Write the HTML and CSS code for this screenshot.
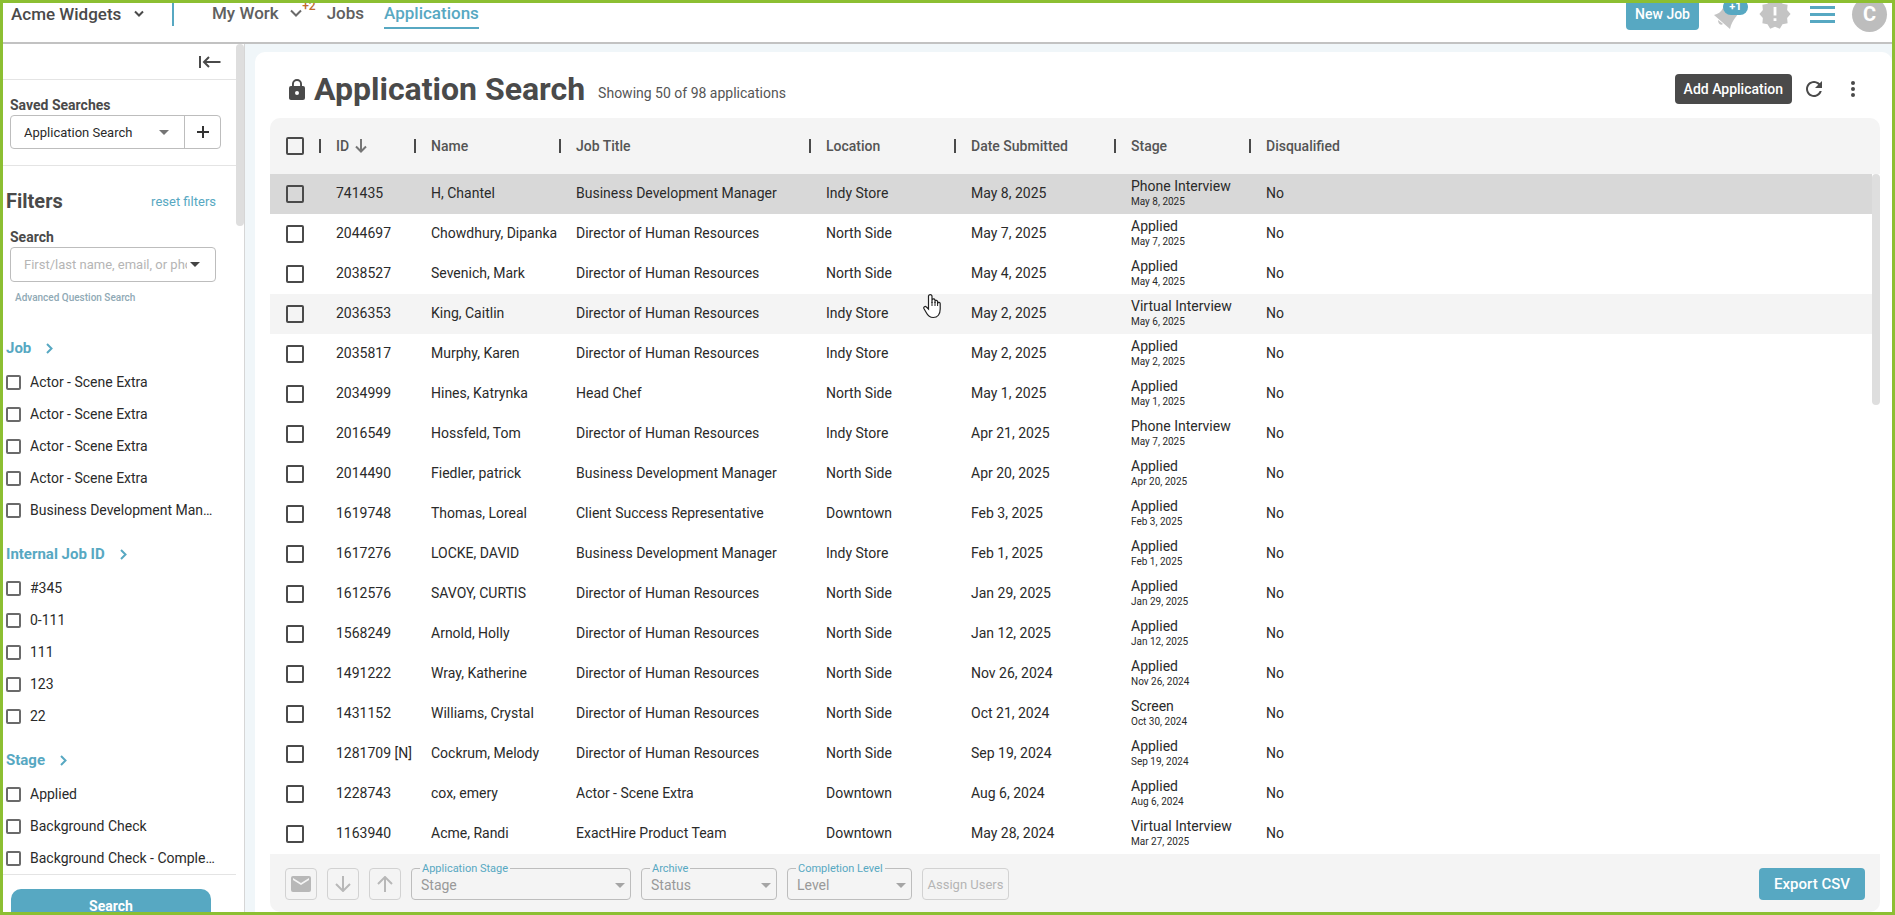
FILE: index.html
```html
<!DOCTYPE html>
<html lang="en">
<head>
    <meta charset="UTF-8">
    <meta name="viewport" content="width=device-width, initial-scale=1.0">
    <title>Application Search</title>
    <link rel="stylesheet" href="styles.css">
</head>
<body>
<div class="app">
    <header class="topbar">
        <button type="button" class="company">Acme Widgets
            <svg width="12" height="8" viewBox="0 0 12 8"><path d="M2 1.5l4 4 4-4" fill="none" stroke="#4a4a4a" stroke-width="2"/></svg>
        </button>
        <nav class="nav">
            <a href="#" class="with-badge">My Work
                <svg width="12" height="8" viewBox="0 0 12 8"><path d="M1 1.5l5 5 5-5" fill="none" stroke="#6a6a6a" stroke-width="2"/></svg>
                <span class="count">+2</span>
            </a>
            <a href="#">Jobs</a>
            <a href="#" class="active">Applications</a>
        </nav>
        <div class="tools">
            <button type="button" class="btn primary">New Job</button>
            <button type="button" class="icon-btn bell" aria-label="Notifications">
                <svg width="30" height="30" viewBox="0 0 30 30" fill="#c4c4c4"><path d="M0 16c4-1 7-3 9-7 2-5 9-8 13-3s2 10-1 13c-2 3-4 6-5 11zM4 21l5 4c-3 2-5-1-5-4z"/></svg>
                <span class="badge">+1</span>
            </button>
            <button type="button" class="icon-btn alert" aria-label="Alerts">
                <svg width="34" height="34" viewBox="0 0 24 24" fill="#c4c4c4"><path d="M23 12l-2.440-2.780.34-3.680-3.610-.82-1.890-3.180L12 3 8.600 1.540 6.710 4.720l-3.610.81.34 3.680L1 12l2.440 2.780-.34 3.690 3.610.82 1.890 3.180L12 21l3.400 1.460 1.890-3.180 3.610-.82-.34-3.680L23 12zm-10 5h-2v-2h2v2zm0-4h-2V7h2v6z"/></svg>
            </button>
            <button type="button" class="icon-btn menu" aria-label="Menu">
                <svg width="25" height="17" viewBox="0 0 25 17" fill="#57a8c2"><path d="M0 0h25v3H0zM0 7h25v3H0zM0 14h25v3H0z"/></svg>
            </button>
            <button type="button" class="avatar">C</button>
        </div>
    </header>

    <div class="layout">
        <aside class="sidebar">
            <div class="collapse">
                <button type="button" class="icon-btn" aria-label="Collapse sidebar">
                    <svg width="22" height="12" viewBox="0 0 22 12" fill="none" stroke="#4a4a4a" stroke-width="2"><path d="M1 0v12M21.500 6H5M10 1L5 6l5 5"/></svg>
                </button>
            </div>
            <section class="saved">
                <label for="saved">Saved Searches</label>
                <div class="saved-row">
                    <div class="select-box">
                        <select id="saved"><option>Application Search</option></select>
                    </div>
                    <button type="button" aria-label="Add saved search">
                        <svg width="12" height="12" viewBox="0 0 12 12" stroke="#333" stroke-width="2"><path d="M6 0v12M0 6h12"/></svg>
                    </button>
                </div>
            </section>
            <section class="filters">
                <div class="filters-head">
                    <h2>Filters</h2>
                    <a href="#">reset filters</a>
                </div>
                <div class="search">
                    <label for="search">Search</label>
                    <div class="search-box"><input id="search" type="text" placeholder="First/last name, email, or phone"></div>
                    <a href="#" class="advanced">Advanced Question Search</a>
                </div>
                <div class="group">
                    <h3>Job <svg width="7" height="11" viewBox="0 0 7 11"><path d="M1 1l4.500 4.500L1 10" fill="none" stroke="#57a8c2" stroke-width="2"/></svg></h3>
                    <label><input type="checkbox"><span>Actor - Scene Extra</span></label>
                    <label><input type="checkbox"><span>Actor - Scene Extra</span></label>
                    <label><input type="checkbox"><span>Actor - Scene Extra</span></label>
                    <label><input type="checkbox"><span>Actor - Scene Extra</span></label>
                    <label><input type="checkbox"><span>Business Development Manager</span></label>
                </div>
                <div class="group">
                    <h3>Internal Job ID <svg width="7" height="11" viewBox="0 0 7 11"><path d="M1 1l4.500 4.500L1 10" fill="none" stroke="#57a8c2" stroke-width="2"/></svg></h3>
                    <label><input type="checkbox"><span>#345</span></label>
                    <label><input type="checkbox"><span>0-111</span></label>
                    <label><input type="checkbox"><span>111</span></label>
                    <label><input type="checkbox"><span>123</span></label>
                    <label><input type="checkbox"><span>22</span></label>
                </div>
                <div class="group">
                    <h3>Stage <svg width="7" height="11" viewBox="0 0 7 11"><path d="M1 1l4.500 4.500L1 10" fill="none" stroke="#57a8c2" stroke-width="2"/></svg></h3>
                    <label><input type="checkbox"><span>Applied</span></label>
                    <label><input type="checkbox"><span>Background Check</span></label>
                    <label><input type="checkbox"><span>Background Check - Completed</span></label>
                </div>
            </section>
            <div class="sidebar-foot"><button type="button">Search</button></div>
            <div class="side-thumb"></div>
        </aside>

        <main class="main">
            <div class="card">
                <div class="title-row">
                    <svg width="16" height="21" viewBox="0 0 16 21"><path fill="#4a4a4a" fill-rule="evenodd" d="M14 7h-1V5A5 5 0 0 0 3 5v2H2a2 2 0 0 0-2 2v10c0 1.100.9 2 2 2h12a2 2 0 0 0 2-2V9a2 2 0 0 0-2-2zM8 16a2 2 0 1 1 0-4 2 2 0 0 1 0 4zm3.100-9H4.900V5a3.100 3.100 0 0 1 6.200 0z"/></svg>
                    <h1>Application Search</h1>
                    <p>Showing 50 of 98 applications</p>
                    <div class="actions">
                        <button type="button" class="btn dark">Add Application</button>
                        <button type="button" class="icon-btn" aria-label="Refresh">
                            <svg width="16" height="16" viewBox="4 4 16 16" fill="#4a4a4a"><path d="M17.650 6.350C16.200 4.900 14.210 4 12 4c-4.420 0-7.990 3.580-7.990 8s3.570 8 7.990 8c3.730 0 6.840-2.550 7.730-6h-2.080c-.82 2.330-3.040 4-5.650 4-3.310 0-6-2.690-6-6s2.690-6 6-6c1.660 0 3.140.69 4.220 1.780L13 11h7V4l-2.350 2.350z"/></svg>
                        </button>
                        <button type="button" class="icon-btn" aria-label="More">
                            <svg width="4" height="16" viewBox="0 0 4 16" fill="#4a4a4a"><circle cx="2" cy="2" r="2"/><circle cx="2" cy="8" r="2"/><circle cx="2" cy="14" r="2"/></svg>
                        </button>
                    </div>
                </div>

                <div class="panel">
                    <div class="table-wrap">
                    <table>
                        <colgroup><col class="c-check"><col class="c-id"><col class="c-name"><col class="c-job"><col class="c-loc"><col class="c-date"><col class="c-stage"><col></colgroup>
                        <thead>
                            <tr>
                                <th><input type="checkbox" aria-label="Select all"></th>
                                <th><span>ID <svg width="12" height="14" viewBox="0 0 12 14"><path d="M6 0v12M1 7.500l5 5 5-5" fill="none" stroke="#757575" stroke-width="2"/></svg></span></th>
                                <th><span>Name</span></th>
                                <th><span>Job Title</span></th>
                                <th><span>Location</span></th>
                                <th><span>Date Submitted</span></th>
                                <th><span>Stage</span></th>
                                <th><span>Disqualified</span></th>
                            </tr>
                        </thead>
                        <tbody>
                            <tr class="selected"><td><input type="checkbox" aria-label="Select 741435"></td><td>741435</td><td>H, Chantel</td><td>Business Development Manager</td><td>Indy Store</td><td>May 8, 2025</td><td>Phone Interview<small>May 8, 2025</small></td><td>No</td></tr>
                            <tr><td><input type="checkbox" aria-label="Select 2044697"></td><td>2044697</td><td>Chowdhury, Dipanka</td><td>Director of Human Resources</td><td>North Side</td><td>May 7, 2025</td><td>Applied<small>May 7, 2025</small></td><td>No</td></tr>
                            <tr><td><input type="checkbox" aria-label="Select 2038527"></td><td>2038527</td><td>Sevenich, Mark</td><td>Director of Human Resources</td><td>North Side</td><td>May 4, 2025</td><td>Applied<small>May 4, 2025</small></td><td>No</td></tr>
                            <tr class="hovered"><td><input type="checkbox" aria-label="Select 2036353"></td><td>2036353</td><td>King, Caitlin</td><td>Director of Human Resources</td><td>Indy Store</td><td>May 2, 2025</td><td>Virtual Interview<small>May 6, 2025</small></td><td>No</td></tr>
                            <tr><td><input type="checkbox" aria-label="Select 2035817"></td><td>2035817</td><td>Murphy, Karen</td><td>Director of Human Resources</td><td>Indy Store</td><td>May 2, 2025</td><td>Applied<small>May 2, 2025</small></td><td>No</td></tr>
                            <tr><td><input type="checkbox" aria-label="Select 2034999"></td><td>2034999</td><td>Hines, Katrynka</td><td>Head Chef</td><td>North Side</td><td>May 1, 2025</td><td>Applied<small>May 1, 2025</small></td><td>No</td></tr>
                            <tr><td><input type="checkbox" aria-label="Select 2016549"></td><td>2016549</td><td>Hossfeld, Tom</td><td>Director of Human Resources</td><td>Indy Store</td><td>Apr 21, 2025</td><td>Phone Interview<small>May 7, 2025</small></td><td>No</td></tr>
                            <tr><td><input type="checkbox" aria-label="Select 2014490"></td><td>2014490</td><td>Fiedler, patrick</td><td>Business Development Manager</td><td>North Side</td><td>Apr 20, 2025</td><td>Applied<small>Apr 20, 2025</small></td><td>No</td></tr>
                            <tr><td><input type="checkbox" aria-label="Select 1619748"></td><td>1619748</td><td>Thomas, Loreal</td><td>Client Success Representative</td><td>Downtown</td><td>Feb 3, 2025</td><td>Applied<small>Feb 3, 2025</small></td><td>No</td></tr>
                            <tr><td><input type="checkbox" aria-label="Select 1617276"></td><td>1617276</td><td>LOCKE, DAVID</td><td>Business Development Manager</td><td>Indy Store</td><td>Feb 1, 2025</td><td>Applied<small>Feb 1, 2025</small></td><td>No</td></tr>
                            <tr><td><input type="checkbox" aria-label="Select 1612576"></td><td>1612576</td><td>SAVOY, CURTIS</td><td>Director of Human Resources</td><td>North Side</td><td>Jan 29, 2025</td><td>Applied<small>Jan 29, 2025</small></td><td>No</td></tr>
                            <tr><td><input type="checkbox" aria-label="Select 1568249"></td><td>1568249</td><td>Arnold, Holly</td><td>Director of Human Resources</td><td>North Side</td><td>Jan 12, 2025</td><td>Applied<small>Jan 12, 2025</small></td><td>No</td></tr>
                            <tr><td><input type="checkbox" aria-label="Select 1491222"></td><td>1491222</td><td>Wray, Katherine</td><td>Director of Human Resources</td><td>North Side</td><td>Nov 26, 2024</td><td>Applied<small>Nov 26, 2024</small></td><td>No</td></tr>
                            <tr><td><input type="checkbox" aria-label="Select 1431152"></td><td>1431152</td><td>Williams, Crystal</td><td>Director of Human Resources</td><td>North Side</td><td>Oct 21, 2024</td><td>Screen<small>Oct 30, 2024</small></td><td>No</td></tr>
                            <tr><td><input type="checkbox" aria-label="Select 1281709"></td><td>1281709 [N]</td><td>Cockrum, Melody</td><td>Director of Human Resources</td><td>North Side</td><td>Sep 19, 2024</td><td>Applied<small>Sep 19, 2024</small></td><td>No</td></tr>
                            <tr><td><input type="checkbox" aria-label="Select 1228743"></td><td>1228743</td><td>cox, emery</td><td>Actor - Scene Extra</td><td>Downtown</td><td>Aug 6, 2024</td><td>Applied<small>Aug 6, 2024</small></td><td>No</td></tr>
                            <tr><td><input type="checkbox" aria-label="Select 1163940"></td><td>1163940</td><td>Acme, Randi</td><td>ExactHire Product Team</td><td>Downtown</td><td>May 28, 2024</td><td>Virtual Interview<small>Mar 27, 2025</small></td><td>No</td></tr>
                        </tbody>
                    </table>
                    <div class="table-scroll"><div class="table-thumb"></div></div>
                    </div>

                    <div class="bulk">
                        <button type="button" class="bulk-btn" aria-label="Email">
                            <svg width="20" height="16" viewBox="0 0 20 16"><path fill="#b8b8b8" d="M18 0H2a2 2 0 0 0-2 2v12a2 2 0 0 0 2 2h16a2 2 0 0 0 2-2V2a2 2 0 0 0-2-2zm0 4l-8 5-8-5V2l8 5 8-5z"/></svg>
                        </button>
                        <button type="button" class="bulk-btn" aria-label="Move down">
                            <svg width="16" height="16" viewBox="0 0 16 16"><path d="M8 0v15M1 8l7 7 7-7" fill="none" stroke="#b8b8b8" stroke-width="2"/></svg>
                        </button>
                        <button type="button" class="bulk-btn" aria-label="Move up">
                            <svg width="16" height="16" viewBox="0 0 16 16"><path d="M8 16V1M1 8l7-7 7 7" fill="none" stroke="#b8b8b8" stroke-width="2"/></svg>
                        </button>
                        <div class="field field-stage"><label for="stage">Application Stage</label><select id="stage"><option>Stage</option></select></div>
                        <div class="field field-archive"><label for="archive">Archive</label><select id="archive"><option>Status</option></select></div>
                        <div class="field field-level"><label for="level">Completion Level</label><select id="level"><option>Level</option></select></div>
                        <button type="button" class="bulk-btn assign">Assign Users</button>
                        <button type="button" class="btn primary export">Export CSV</button>
                    </div>
                </div>
            </div>
        </main>
    </div>

    <svg class="pointer" width="18" height="26" viewBox="0 0 18 26"><path d="M5.500 16V3a1.800 1.800 0 0 1 3.500 0v7-3a1.600 1.600 0 0 1 3 0v3-2a1.500 1.500 0 0 1 2.600.4V11v-1a1.400 1.400 0 0 1 2.600.5V16c0 5-2.500 8.500-7 8.500-3.500 0-5.200-1.500-7-5L.9 15.500c-.7-1.500 1.300-2.700 2.500-1.500z" fill="#fff" stroke="#222" stroke-width="1.200"/><path d="M9 9v4M12 9v4M14.600 10v3" stroke="#222"/></svg>
</div>
</body>
</html>
```
FILE: styles.css
```css
* { box-sizing: border-box; }
body {
    margin: 0;
    font-family: Roboto, "Liberation Sans", sans-serif;
    font-size: 14px;
    color: #2a2a2a;
}
button, input, select { font-family: inherit; font-size: inherit; color: inherit; }
button {
    border: none;
    background: none;
    padding: 0;
    cursor: pointer;
}
a { color: inherit; text-decoration: none; }
h1, h2, h3, p { margin: 0; }
svg { display: block; flex: none; }
input[type="checkbox"] {
    appearance: none;
    flex: none;
    margin: 0;
    width: 18px;
    height: 18px;
    border: 2px solid #4a4a4a;
    border-radius: 2px;
}
.app {
    position: relative;
    display: flex;
    flex-direction: column;
    height: 100vh;
    border: 3px solid #8cbf32;
    overflow: hidden;
    background: #fff;
}

/* top bar */
.topbar {
    flex: none;
    display: flex;
    align-items: center;
    height: 58px;
    margin-top: -17px;
    padding: 0 5px 0 8px;
    border-bottom: 2px solid #c2c2c2;
    font-size: 17px;
    font-weight: 500;
    color: #4a4a4a;
}
.company {
    display: flex;
    align-items: center;
    gap: 12px;
    width: 163px;
    height: 24px;
    border-right: 2px solid #57a8c2;
    font-weight: 500;
    white-space: nowrap;
}
.nav {
    display: flex;
    gap: 20px;
    margin-left: 38px;
    line-height: 20px;
    color: #606060;
}
.nav a { padding: 3px 0 4px; border-bottom: 2px solid transparent; }
.nav a.active { color: #57a8c2; border-color: #57a8c2; }
.nav .with-badge {
    position: relative;
    display: flex;
    align-items: center;
    gap: 11px;
    margin-right: 5px;
}
.count {
    position: absolute;
    right: -14px;
    top: -1px;
    font-size: 12px;
    line-height: 14px;
    color: #c0692e;
}
.tools { display: flex; align-items: center; margin-left: auto; }
.icon-btn { display: flex; align-items: center; }
.bell { position: relative; margin-left: 15px; }
.badge {
    position: absolute;
    left: 9px;
    top: 0;
    width: 25px;
    padding: 1px 0;
    border-radius: 8px;
    background: #57a8c2;
    color: #fff;
    font-size: 11px;
    font-weight: 700;
    line-height: 14px;
    text-align: center;
}
.alert { margin-left: 14px; }
.menu { margin-left: 18px; }
.avatar {
    width: 35px;
    height: 35px;
    margin-left: 17px;
    border-radius: 50%;
    background: #bdbdbd;
    color: #fff;
    font-size: 20px;
    font-weight: 700;
}
.btn {
    height: 32px;
    padding: 0 9px;
    border-radius: 4px;
    color: #fff;
    font-size: 14px;
    font-weight: 500;
}
.primary { background: #57a8c2; }
.dark { height: 30px; background: #4a4a4a; }

.layout { flex: 1; display: flex; min-height: 0; }

/* sidebar */
.sidebar {
    position: relative;
    flex: none;
    display: flex;
    flex-direction: column;
    width: 242px;
    border-right: 1px solid #d6d6d6;
}
.collapse {
    flex: none;
    display: flex;
    justify-content: flex-end;
    align-items: center;
    height: 36px;
    margin-right: 8px;
    padding-right: 15px;
    border-bottom: 1px solid #e4e4e4;
}
.saved {
    flex: none;
    height: 86px;
    margin-right: 8px;
    padding: 15px 15px 0 7px;
    border-bottom: 1px solid #e4e4e4;
}
.saved label, .search label {
    display: block;
    font-weight: 700;
    line-height: 20px;
    color: #4a4a4a;
}
.saved-row {
    display: flex;
    height: 34px;
    border: 1px solid #bdbdbd;
    border-radius: 4px;
}
.select-box { position: relative; flex: 1; }
.select-box::after, .search-box::after, .field::after {
    content: "";
    position: absolute;
    right: 15px;
    top: 14px;
    border: 5px solid transparent;
    border-top-color: #757575;
    border-bottom: none;
    pointer-events: none;
}
select {
    appearance: none;
    width: 100%;
    height: 100%;
    border: none;
    background: none;
    outline: none;
}
.saved select { padding: 0 13px; font-size: 13px; }
.saved-row button {
    display: flex;
    align-items: center;
    justify-content: center;
    width: 36px;
    border-left: 1px solid #bdbdbd;
}
.filters { flex: 1; min-height: 0; overflow: hidden; padding: 22px 26px 0 3px; }
.filters-head {
    display: flex;
    justify-content: space-between;
    align-items: center;
    padding-right: 2px;
}
.filters-head h2 { font-size: 20px; line-height: 26px; color: #4a4a4a; }
.filters-head a { font-size: 13px; color: #57a8c2; }
.search { margin-bottom: 30px; padding: 13px 2px 0 4px; }
.search-box {
    position: relative;
    height: 35px;
    padding: 0 28px 0 13px;
    border: 1px solid #bdbdbd;
    border-radius: 4px;
}
.search-box::after { border-top-color: #444; }
.search-box input {
    width: 100%;
    height: 100%;
    padding: 0;
    border: none;
    outline: none;
    background: none;
    font-size: 13px;
}
.search-box input::placeholder { color: #b5b5b5; }
.advanced {
    display: block;
    padding: 8px 5px 0;
    font-size: 10px;
    font-weight: 500;
    line-height: 16px;
    color: #8fa9b5;
}
.group { margin-bottom: 16px; }
.group h3 {
    display: flex;
    align-items: center;
    gap: 15px;
    height: 24px;
    margin-bottom: 6px;
    font-size: 15px;
    font-weight: 700;
    color: #57a8c2;
}
.group label { display: flex; align-items: center; gap: 9px; height: 32px; }
.group span { overflow: hidden; text-overflow: ellipsis; white-space: nowrap; }
.group input { width: 15px; height: 15px; border-color: #6a6a6a; }
.sidebar-foot {
    flex: none;
    height: 38px;
    margin-right: 8px;
    padding: 14px 25px 0 8px;
    border-top: 1px solid #e4e4e4;
    overflow: hidden;
}
.sidebar-foot button {
    width: 100%;
    height: 34px;
    border-radius: 10px;
    background: #57a8c2;
    color: #fff;
    font-weight: 700;
}
.side-thumb {
    position: absolute;
    top: 0;
    right: 0;
    width: 8px;
    height: 182px;
    border-radius: 4px;
    background: #dedede;
}

/* results card */
.main { flex: 1; min-width: 0; padding: 8px 0 0 10px; background: #f0f6f9; }
.card {
    display: flex;
    flex-direction: column;
    height: 100%;
    padding: 0 12px 0 15px;
    border-radius: 10px 10px 0 0;
    background: #fff;
}
.title-row { display: flex; align-items: center; height: 66px; padding: 8px 25px 0 19px; }
.title-row h1 { margin-left: 9px; font-size: 32px; line-height: 40px; color: #4a4a4a; }
.title-row p { margin-left: 13px; padding-top: 8px; color: #555; }
.actions { display: flex; align-items: center; margin-left: auto; }
.actions .icon-btn { margin-left: 14px; }
.actions .icon-btn:last-child { margin-left: 29px; }
.panel {
    flex: 1;
    display: flex;
    flex-direction: column;
    border-radius: 10px;
    background: #f4f4f4;
    overflow: hidden;
}
.table-wrap { position: relative; }
table { width: 100%; table-layout: fixed; border-collapse: collapse; }
.c-check { width: 50px; }
.c-id { width: 95px; }
.c-name { width: 145px; }
.c-job { width: 250px; }
.c-loc { width: 145px; }
.c-date { width: 160px; }
.c-stage { width: 135px; }
th {
    height: 56px;
    padding: 0 0 1px;
    text-align: left;
    font-weight: 500;
    color: #555;
}
th span {
    display: flex;
    align-items: center;
    gap: 6px;
    height: 14px;
    margin-left: -1px;
    padding-left: 15px;
    border-left: 2px solid #4a4a4a;
}
td {
    height: 40px;
    padding: 0 0 2px 16px;
    line-height: 18px;
    overflow: hidden;
    white-space: nowrap;
}
th:first-child { padding-left: 16px; }
td:first-child { padding-bottom: 0; }
td input, th input { display: block; }
td small { display: block; font-size: 10px; line-height: 14px; }
tbody tr { background: #fff; }
tbody tr.selected { background: #d8d8d8; }
tbody tr.hovered { background: #f4f4f4; }
.table-scroll {
    position: absolute;
    top: 56px;
    right: 0;
    bottom: 0;
    width: 8px;
    background: #fff;
}
.table-thumb { height: 231px; border-radius: 4px; background: #dedede; }

/* bulk actions */
.bulk { display: flex; gap: 10px; padding: 14px 15px 12px; }
.bulk-btn {
    display: flex;
    align-items: center;
    justify-content: center;
    width: 32px;
    height: 32px;
    border: 1px solid #d2d2d2;
    border-radius: 4px;
}
.assign { width: 87px; font-size: 13px; color: #b5b5b5; }
.field {
    position: relative;
    height: 32px;
    border: 1px solid #bdbdbd;
    border-radius: 4px;
}
.field::after { right: 5px; border-top-color: #a5a5a5; }
.field label {
    position: absolute;
    left: 8px;
    top: -7px;
    padding: 0 2px;
    background: #f4f4f4;
    font-size: 11px;
    line-height: 14px;
    white-space: nowrap;
    color: #57a8c2;
}
.field select { padding: 1px 9px 0; font-size: 14px; color: #999; }
.field-stage { width: 220px; }
.field-archive { width: 136px; }
.field-level { width: 125px; }
.export { width: 106px; margin-left: auto; font-size: 15px; }

.pointer { position: absolute; left: 920px; top: 290px; }
```
